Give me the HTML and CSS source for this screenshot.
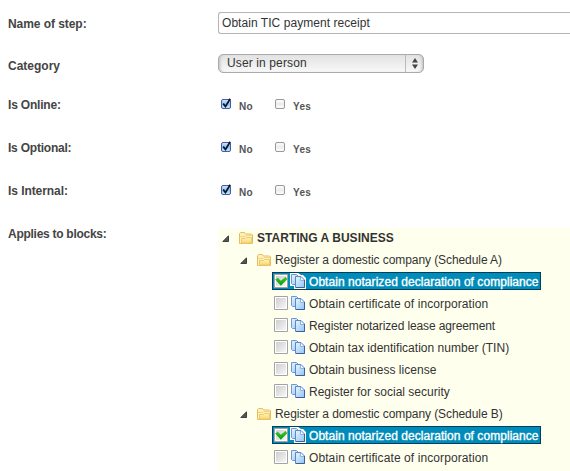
FILE: index.html
```html
<!DOCTYPE html>
<html lang="en">
<head>
<meta charset="utf-8">
<title>Step</title>
<link rel="stylesheet" href="styles.css">
</head>
<body>
<svg class="defs" width="0" height="0">
  <defs>
    <linearGradient id="gFolder" x1="0" y1="0" x2="0" y2="1"><stop offset="0" stop-color="#fff3b8"/><stop offset="1" stop-color="#f8d775"/></linearGradient>
    <linearGradient id="gPage" x1="0" y1="0" x2="1" y2="1"><stop offset="0" stop-color="#eaf5ff"/><stop offset="1" stop-color="#8fc4f5"/></linearGradient>
    <linearGradient id="gBox" x1="0" y1="0" x2="1" y2="1"><stop offset="0" stop-color="#cfcfcf"/><stop offset="1" stop-color="#f6f6f6"/></linearGradient>
    <linearGradient id="gTick" x1="0" y1="0" x2="0" y2="1"><stop offset="0" stop-color="#3ccb32"/><stop offset="1" stop-color="#079a0d"/></linearGradient>
    <linearGradient id="gOn" x1="0" y1="0" x2="0" y2="1"><stop offset="0" stop-color="#d5e8fb"/><stop offset=".5" stop-color="#8fc1f0"/><stop offset="1" stop-color="#c2f0ff"/></linearGradient>
    <linearGradient id="gOff" x1="0" y1="0" x2="0" y2="1"><stop offset="0" stop-color="#fff"/><stop offset=".5" stop-color="#ececec"/><stop offset="1" stop-color="#fff"/></linearGradient>
  </defs>
  <symbol id="arrow" viewBox="0 0 7 7"><path d="M6.500 .8v5.700h-5.700z" fill="#555" stroke="#333" stroke-width=".9"/></symbol>
  <symbol id="folder" viewBox="0 0 14 12"><path d="M.5 11.500v-10l1-1h4l1 1.500h6l1 1v8.500z" fill="#fff0b5" stroke="#e8bd60"/><path d="M1 4.500h5l1-1h6" fill="none" stroke="#f3d58a"/><path d="M2.500 11v-4.500h4l1-1h5v5.500z" fill="url(#gFolder)" stroke="#f0cb69"/></symbol>
  <symbol id="pages" viewBox="0 0 16 16"><path d="M0 0h8l3 2h2l3 3v11h-12v-3h-4z" fill="#fff"/><path d="M1.500 1.500h5l3 3v7h-7l-1-1z" fill="url(#gPage)" stroke="#6f98cb"/><path d="M5.500 3.500h5.500l3.500 3.500v7.500h-9z" fill="url(#gPage)" stroke="#5b88c2"/><path d="M10.500 4v3.500h3.500" fill="#f5faff" stroke="#8fb3dc"/><path d="M14.500 7v7.500h-8.500" fill="none" stroke="#3f6192"/></symbol>
  <symbol id="box" viewBox="0 0 14 14"><path d="M.5.5h13v13h-13z" fill="#fff" stroke="#a3a3a3"/><path d="M2 2h10v10h-10z" fill="url(#gBox)"/></symbol>
  <symbol id="boxOn" viewBox="0 0 14 14"><path d="M.5.5h13v13h-13z" fill="#fff" stroke="#a3a3a3"/><path d="M2 2h10v10h-10z" fill="url(#gBox)"/><path d="M1.200 5.500l2.600-1.800 3 3 5-3.900 1.500 2.400-6.500 6.600z" fill="url(#gTick)"/></symbol>
  <symbol id="checkOn" viewBox="0 0 12 12"><rect x="1.500" y="1.500" width="9" height="9" rx="1.500" fill="url(#gOn)" stroke="#4a58a5"/><path d="M3.200 5.600l2.300 2.900 4.700-7.700" fill="none" stroke="#07152d" stroke-width="1.700"/></symbol>
  <symbol id="checkOff" viewBox="0 0 12 12"><rect x="1.500" y="1.500" width="9" height="9" rx="1.500" fill="url(#gOff)" stroke="#999"/></symbol>
</svg>
<form class="form">
  <div class="row row-name"><div class="label l-name">Name of step:</div><div class="textbox"><span class="t-name">Obtain TIC payment receipt</span></div></div>
  <div class="row row-cat"><div class="label l-cat">Category</div><div class="select"><span class="value">User in person</span><span class="stepper"><svg width="6" height="11" viewBox="0 0 6 11"><path d="M3 0l3 4.500h-6zM0 6.500h6l-3 4.500z" fill="#444"/></svg></span></div></div>
  <div class="row row-check"><div class="label l-online">Is Online:</div><div class="checks"><svg class="check"><use href="#checkOn"/></svg><span class="no">No</span><svg class="check"><use href="#checkOff"/></svg><span>Yes</span></div></div>
  <div class="row row-check"><div class="label l-optional">Is Optional:</div><div class="checks"><svg class="check"><use href="#checkOn"/></svg><span class="no">No</span><svg class="check"><use href="#checkOff"/></svg><span>Yes</span></div></div>
  <div class="row row-check"><div class="label l-internal">Is Internal:</div><div class="checks"><svg class="check"><use href="#checkOn"/></svg><span class="no">No</span><svg class="check"><use href="#checkOff"/></svg><span>Yes</span></div></div>
  <div class="row row-blocks"><div class="label l-blocks">Applies to blocks:</div>
    <div class="tree">
      <div class="node root"><svg class="arrow"><use href="#arrow"/></svg><svg class="folder"><use href="#folder"/></svg><span class="t-root">STARTING A BUSINESS</span></div>
      <div class="node group"><svg class="arrow"><use href="#arrow"/></svg><svg class="folder"><use href="#folder"/></svg><span class="t-group">Register a domestic company (Schedule A)</span></div>
      <div class="node leaf"><div class="item selected"><svg class="box"><use href="#boxOn"/></svg><svg class="pages"><use href="#pages"/></svg><span class="t-sel">Obtain notarized declaration of compliance</span></div></div>
      <div class="node leaf"><div class="item"><svg class="box"><use href="#box"/></svg><svg class="pages"><use href="#pages"/></svg><span class="t-cert">Obtain certificate of incorporation</span></div></div>
      <div class="node leaf"><div class="item"><svg class="box"><use href="#box"/></svg><svg class="pages"><use href="#pages"/></svg><span class="t-lease">Register notarized lease agreement</span></div></div>
      <div class="node leaf"><div class="item"><svg class="box"><use href="#box"/></svg><svg class="pages"><use href="#pages"/></svg><span class="t-tin">Obtain tax identification number (TIN)</span></div></div>
      <div class="node leaf"><div class="item"><svg class="box"><use href="#box"/></svg><svg class="pages"><use href="#pages"/></svg><span class="t-lic">Obtain business license</span></div></div>
      <div class="node leaf"><div class="item"><svg class="box"><use href="#box"/></svg><svg class="pages"><use href="#pages"/></svg><span class="t-soc">Register for social security</span></div></div>
      <div class="node group"><svg class="arrow"><use href="#arrow"/></svg><svg class="folder"><use href="#folder"/></svg><span class="t-group">Register a domestic company (Schedule B)</span></div>
      <div class="node leaf"><div class="item selected"><svg class="box"><use href="#boxOn"/></svg><svg class="pages"><use href="#pages"/></svg><span class="t-sel">Obtain notarized declaration of compliance</span></div></div>
      <div class="node leaf"><div class="item"><svg class="box"><use href="#box"/></svg><svg class="pages"><use href="#pages"/></svg><span class="t-cert">Obtain certificate of incorporation</span></div></div>
    </div>
  </div>
</form>
</body>
</html>
```
FILE: styles.css
```css
* { box-sizing: border-box; }
body { margin: 0; background: #fff; color: #333; font: 12px/16px "Liberation Sans", Arial, sans-serif; overflow: hidden; }
svg { display: block; flex: none; }
.defs { position: absolute; }
.form { height: 471px; padding-top: 12px; overflow: hidden; }
.row { display: flex; align-items: flex-start; white-space: nowrap; }
.label { width: 218px; flex: none; padding-left: 8px; font-weight: bold; color: #444; }
.l-name { letter-spacing: -.06px; }
.l-online { letter-spacing: -.2px; }
.l-optional { letter-spacing: -.22px; }
.l-internal { letter-spacing: -.07px; }
.l-blocks { letter-spacing: -.27px; }
.row-name { height: 42px; }
.row-name .label { padding-top: 4px; }
.textbox { flex: 1; height: 22px; border: 1px solid #b5b5b5; border-right: 0; border-radius: 3px 0 0 3px; padding: 2px 3px; }
.t-name { letter-spacing: .05px; }
.row-cat { height: 42px; }
.row-cat .label { padding-top: 4px; }
.select { display: flex; width: 206px; height: 19px; border: 1px solid #aaa; border-radius: 5px; background: linear-gradient(#e2e2e2, #f8f8f8); box-shadow: inset 3px 0 3px -2px #bbb, inset -3px 0 3px -2px #bbb; }
.value { flex: 1; padding-left: 8px; line-height: 17px; letter-spacing: .12px; }
.stepper { display: flex; width: 18px; align-items: center; justify-content: center; border-left: 1px solid #bbb; }
.row-check { height: 43px; }
.row-check .label { padding-top: 1px; }
.checks { display: flex; padding: 2px 0 0 2px; font-size: 10px; font-weight: bold; color: #555; letter-spacing: .3px; }
.checks span { padding: 3px 0 0 7px; line-height: 12px; }
.checks .no { width: 42px; }
.check { width: 12px; height: 12px; }
.row-blocks { height: 246px; }
.row-blocks .label { padding-top: 1px; }
.tree { flex: 1; height: 243px; margin-top: 3px; background: #ffffee; }
.node { display: flex; height: 22px; align-items: center; }
.root { height: 21px; padding: 0 0 1px 4px; font-weight: bold; letter-spacing: .03px; }
.group { padding-left: 22px; }
.t-group { letter-spacing: -.08px; }
.t-sel { letter-spacing: .05px; }
.t-cert { letter-spacing: .09px; }
.t-lease { letter-spacing: -.12px; }
.t-tin { letter-spacing: .02px; }
.t-lic { letter-spacing: .03px; }
.leaf { padding: 0 0 2px 54px; }
.arrow { width: 7px; height: 7px; margin-right: 10px; }
.folder { width: 14px; height: 12px; margin-right: 4px; }
.item { display: flex; align-items: center; height: 18px; border: 1px solid transparent; padding: 0 1px; }
.item span { margin-top: 2px; }
.item.selected { background: #008cba; border-color: #003f5c; color: #fff; -webkit-text-stroke: .35px #fff; }
.box { width: 14px; height: 14px; margin-right: 2px; }
.pages { width: 16px; height: 16px; margin-right: 3px; }
```
